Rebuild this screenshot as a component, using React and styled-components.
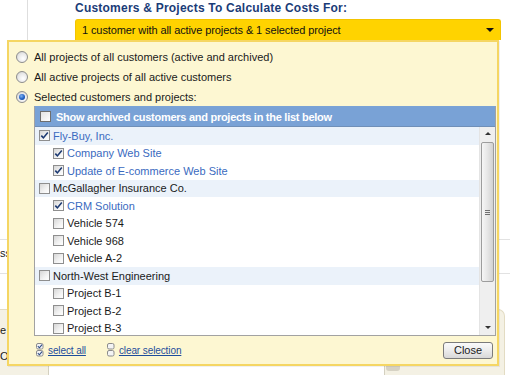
import React from "react";
import styled, { createGlobalStyle, css } from "styled-components";

const GlobalStyle = createGlobalStyle`
  html, body {
    margin: 0;
    padding: 0;
    background: #fff;
  }
  body {
    font-family: "Liberation Sans", Arial, sans-serif;
    font-size: 11px;
    color: #1a1a1a;
  }
`;

const customers = [
  {
    name: "Fly-Buy, Inc.",
    checked: true,
    projects: [
      { name: "Company Web Site", checked: true },
      { name: "Update of E-commerce Web Site", checked: true }
    ]
  },
  {
    name: "McGallagher Insurance Co.",
    checked: false,
    projects: [
      { name: "CRM Solution", checked: true },
      { name: "Vehicle 574" },
      { name: "Vehicle 968" },
      { name: "Vehicle A-2" }
    ]
  },
  {
    name: "North-West Engineering",
    checked: false,
    projects: [
      { name: "Project B-1" },
      { name: "Project B-2" },
      { name: "Project B-3" }
    ]
  }
];

const radioOptions = [
  { label: "All projects of all customers (active and archived)" },
  { label: "All active projects of all active customers" },
  { label: "Selected customers and projects:", selected: true }
];

function CheckMark() {
  return (
    <svg width="11" height="11" viewBox="0 0 11 11">
      <path
        d="M2.3 5.6 L4.4 7.9 L8.8 2.6"
        fill="none"
        stroke="#1d3a72"
        strokeWidth="1.6"
      />
    </svg>
  );
}

function TinyBoxes({ checked }) {
  return (
    <svg width="8" height="14" viewBox="0 0 8 14">
      {[0, 7].map(y => (
        <g key={y}>
          <rect
            x="0.5"
            y={y + 0.5}
            width="6.5"
            height="5.5"
            rx="1.5"
            fill="#f4f4f4"
            stroke="#8c8c8c"
          />
          {checked && (
            <path
              d={`M1.8 ${y + 3.2} L3.4 ${y + 4.8} L6 ${y + 1.6}`}
              fill="none"
              stroke="#2a4a86"
              strokeWidth="1.1"
            />
          )}
        </g>
      ))}
    </svg>
  );
}

export default function App() {
  return (
    <>
      <GlobalStyle />
      <Page>
        <Backdrop>
          <TopArea>
            <Rail />
            <Main>
              <Title>Customers &amp; Projects To Calculate Costs For:</Title>
              <Dropdown>
                <span>1 customer with all active projects &amp; 1 selected project</span>
                <Caret />
              </Dropdown>
            </Main>
          </TopArea>
          <FieldRow>ss</FieldRow>
          <BottomPanel>
            <PanelLabel>e</PanelLabel>
            <PanelLabel>O</PanelLabel>
            <InputBox>
              <InputGrip />
            </InputBox>
          </BottomPanel>
        </Backdrop>

        <Popup>
          <RadioList>
            {radioOptions.map(option => (
              <RadioRow key={option.label}>
                <Radio selected={option.selected} />
                {option.label}
              </RadioRow>
            ))}
          </RadioList>

          <ListBox>
            <ListHeader>
              <Checkbox header />
              Show archived customers and projects in the list below
            </ListHeader>
            <ListBody>
              <Rows>
                {customers.map(customer => (
                  <React.Fragment key={customer.name}>
                    <Row customer>
                      <Checkbox>{customer.checked && <CheckMark />}</Checkbox>
                      <RowLabel checked={customer.checked}>{customer.name}</RowLabel>
                    </Row>
                    {customer.projects.map(project => (
                      <Row key={project.name}>
                        <Checkbox>{project.checked && <CheckMark />}</Checkbox>
                        <RowLabel checked={project.checked}>{project.name}</RowLabel>
                      </Row>
                    ))}
                  </React.Fragment>
                ))}
              </Rows>
              <Scrollbar>
                <ScrollArrow up />
                <Thumb>
                  <Grip />
                </Thumb>
                <ScrollArrow />
              </Scrollbar>
            </ListBody>
          </ListBox>

          <Footer>
            <FooterLink>
              <TinyBoxes checked />
              <span>select all</span>
            </FooterLink>
            <FooterLink>
              <TinyBoxes />
              <span>clear selection</span>
            </FooterLink>
            <CloseButton>Close</CloseButton>
          </Footer>
        </Popup>
      </Page>
    </>
  );
}

const Page = styled.div`
  position: relative;
  width: 510px;
  height: 375px;
  overflow: hidden;
  background: #fff;
`;

const Backdrop = styled.div`
  display: flex;
  flex-direction: column;
  height: 100%;
`;

const TopArea = styled.div`
  display: flex;
  height: 242px;
`;

const Rail = styled.div`
  width: 27px;
  border-right: 1px solid #dedede;
`;

const Main = styled.div`
  flex: 1;
  padding: 1px 0 0 47px;
`;

const Title = styled.div`
  font-size: 12px;
  font-weight: bold;
  line-height: 14px;
  letter-spacing: 0.22px;
  color: #1b3c78;
  margin-bottom: 4px;
`;

const Dropdown = styled.div`
  display: flex;
  align-items: center;
  justify-content: space-between;
  width: 426px;
  height: 21px;
  box-sizing: border-box;
  padding: 0 6px 0 6px;
  background: #ffd300;
  border: 1px solid #f3c400;
  border-bottom: none;
  border-radius: 3px 3px 0 0;
  font-size: 11px;
  letter-spacing: -0.1px;
  color: #111;
`;

const Caret = styled.span`
  width: 0;
  height: 0;
  border-left: 4px solid transparent;
  border-right: 4px solid transparent;
  border-top: 4px solid #111;
`;

const FieldRow = styled.div`
  height: 34px;
  line-height: 26px;
  border-top: 1px solid #e2e2e2;
  border-bottom: 1px solid #e2e2e2;
  font-size: 11px;
`;

const BottomPanel = styled.div`
  position: relative;
  margin-top: 35px;
  width: 505px;
  flex: 1;
  box-sizing: border-box;
  padding-top: 13px;
  background: #f4f1e4;
  border-top: 1px solid #e3dcc3;
  border-right: 1px solid #e3dcc3;
  border-radius: 0 7px 0 0;
`;

const PanelLabel = styled.div`
  font-size: 11px;
  line-height: 14px;
  height: 26px;
`;

const InputBox = styled.div`
  position: absolute;
  left: 48px;
  top: 52px;
  width: 335px;
  height: 16px;
  background: #fff;
  border: 1px solid #d4d0c0;
`;

const InputGrip = styled.div`
  position: absolute;
  right: -16px;
  top: 0;
  width: 14px;
  height: 8px;
  background: #d6d2c4;
  border-radius: 0 0 3px 3px;
`;

const Popup = styled.div`
  position: absolute;
  left: 7px;
  top: 40px;
  width: 492px;
  height: 326px;
  box-sizing: border-box;
  display: flex;
  flex-direction: column;
  background: #fdf7d2;
  border: 2px solid #f5d663;
  box-shadow: 1px 1px 0 rgba(0, 0, 0, 0.06);
`;

const RadioList = styled.div`
  padding: 5px 0 0 7px;
`;

const RadioRow = styled.div`
  display: flex;
  align-items: center;
  gap: 6px;
  height: 20px;
  font-size: 11px;
  color: #1a1a1a;
`;

const Radio = styled.span`
  position: relative;
  width: 12px;
  height: 12px;
  box-sizing: border-box;
  border-radius: 50%;
  border: 1px solid #8d8d8d;
  background: radial-gradient(circle at 60% 65%, #ffffff 0%, #e8e8e8 55%, #c9c9c9 100%);
  ${({ selected }) =>
    selected &&
    css`
      &::after {
        content: "";
        position: absolute;
        left: 2px;
        top: 2px;
        width: 6px;
        height: 6px;
        border-radius: 50%;
        background: radial-gradient(circle at 40% 35%, #7fb2f0 0%, #1f5fc4 55%, #113a80 100%);
      }
    `};
`;

const ListBox = styled.div`
  margin: -1px 1px 0 25px;
  border: 1px solid #a2a2a2;
  border-top-color: #7aa3d6;
  background: #fff;
`;

const ListHeader = styled.div`
  display: flex;
  align-items: center;
  gap: 5px;
  height: 20px;
  box-sizing: border-box;
  padding-left: 5px;
  background: #79a2d6;
  border-bottom: 1px solid #6f8fb8;
  color: #fff;
  font-weight: bold;
  font-size: 11px;
  letter-spacing: -0.27px;
`;

const Checkbox = styled.span`
  display: inline-flex;
  flex: none;
  width: 11px;
  height: 11px;
  box-sizing: border-box;
  border: 1px solid #8e8e8e;
  background: linear-gradient(135deg, #d6d6d6 0%, #f3f3f3 60%, #ffffff 100%);
  align-items: center;
  justify-content: center;
  svg {
    margin: -1px;
  }
  ${({ header }) =>
    header &&
    css`
      border-color: #6e6e6e;
      background: linear-gradient(135deg, #e3e3e3 0%, #ffffff 100%);
    `};
`;

const ListBody = styled.div`
  display: flex;
  height: 208px;
`;

const Rows = styled.div`
  flex: 1;
  overflow: hidden;
`;

const Row = styled.div`
  display: flex;
  align-items: center;
  gap: 3px;
  height: 17.5px;
  padding-left: ${({ customer }) => (customer ? "4px" : "18px")};
  background: ${({ customer }) => (customer ? "#ebf2fa" : "transparent")};
`;

const RowLabel = styled.span`
  font-size: 11px;
  color: ${({ checked }) => (checked ? "#3a6ac0" : "#1a1a1a")};
`;

const Scrollbar = styled.div`
  display: flex;
  flex-direction: column;
  width: 15px;
  background: #efefef;
  border-left: 1px solid #e4e4e4;
`;

const ScrollArrow = styled.div`
  position: relative;
  height: 15px;
  flex: none;
  ${({ up }) =>
    up
      ? css`
          &::after {
            content: "";
            position: absolute;
            left: 5px;
            top: 5px;
            border-left: 3px solid transparent;
            border-right: 3px solid transparent;
            border-bottom: 3px solid #333;
          }
        `
      : css`
          margin-top: auto;
          &::after {
            content: "";
            position: absolute;
            left: 5px;
            bottom: 6px;
            border-left: 3px solid transparent;
            border-right: 3px solid transparent;
            border-top: 3px solid #333;
          }
        `};
`;

const Thumb = styled.div`
  display: flex;
  align-items: center;
  justify-content: center;
  height: 140px;
  margin: 0 1px;
  box-sizing: border-box;
  border: 1px solid #9d9d9d;
  border-radius: 2px;
  background: linear-gradient(90deg, #f6f6f6 0%, #e6e6e6 50%, #d2d2d2 100%);
`;

const Grip = styled.div`
  width: 5px;
  height: 5px;
  background: repeating-linear-gradient(180deg, #6f6f6f 0 1px, transparent 1px 2px);
`;

const Footer = styled.div`
  display: flex;
  align-items: center;
  flex: 1;
  padding: 0 4px 0 27px;
`;

const FooterLink = styled.span`
  display: inline-flex;
  align-items: center;
  gap: 4px;
  margin-right: 21px;
  color: #1d4d9c;
  font-size: 10px;
  letter-spacing: -0.1px;
  span {
    text-decoration: underline;
  }
`;

const CloseButton = styled.button`
  margin-left: auto;
  width: 50px;
  height: 17px;
  padding: 0;
  font-family: "Liberation Sans", Arial, sans-serif;
  font-size: 11px;
  color: #1a1a1a;
  border: 1px solid #7b7b7b;
  border-radius: 3px;
  background: linear-gradient(180deg, #fafafa 0%, #ececec 50%, #d8d8d8 100%);
`;
